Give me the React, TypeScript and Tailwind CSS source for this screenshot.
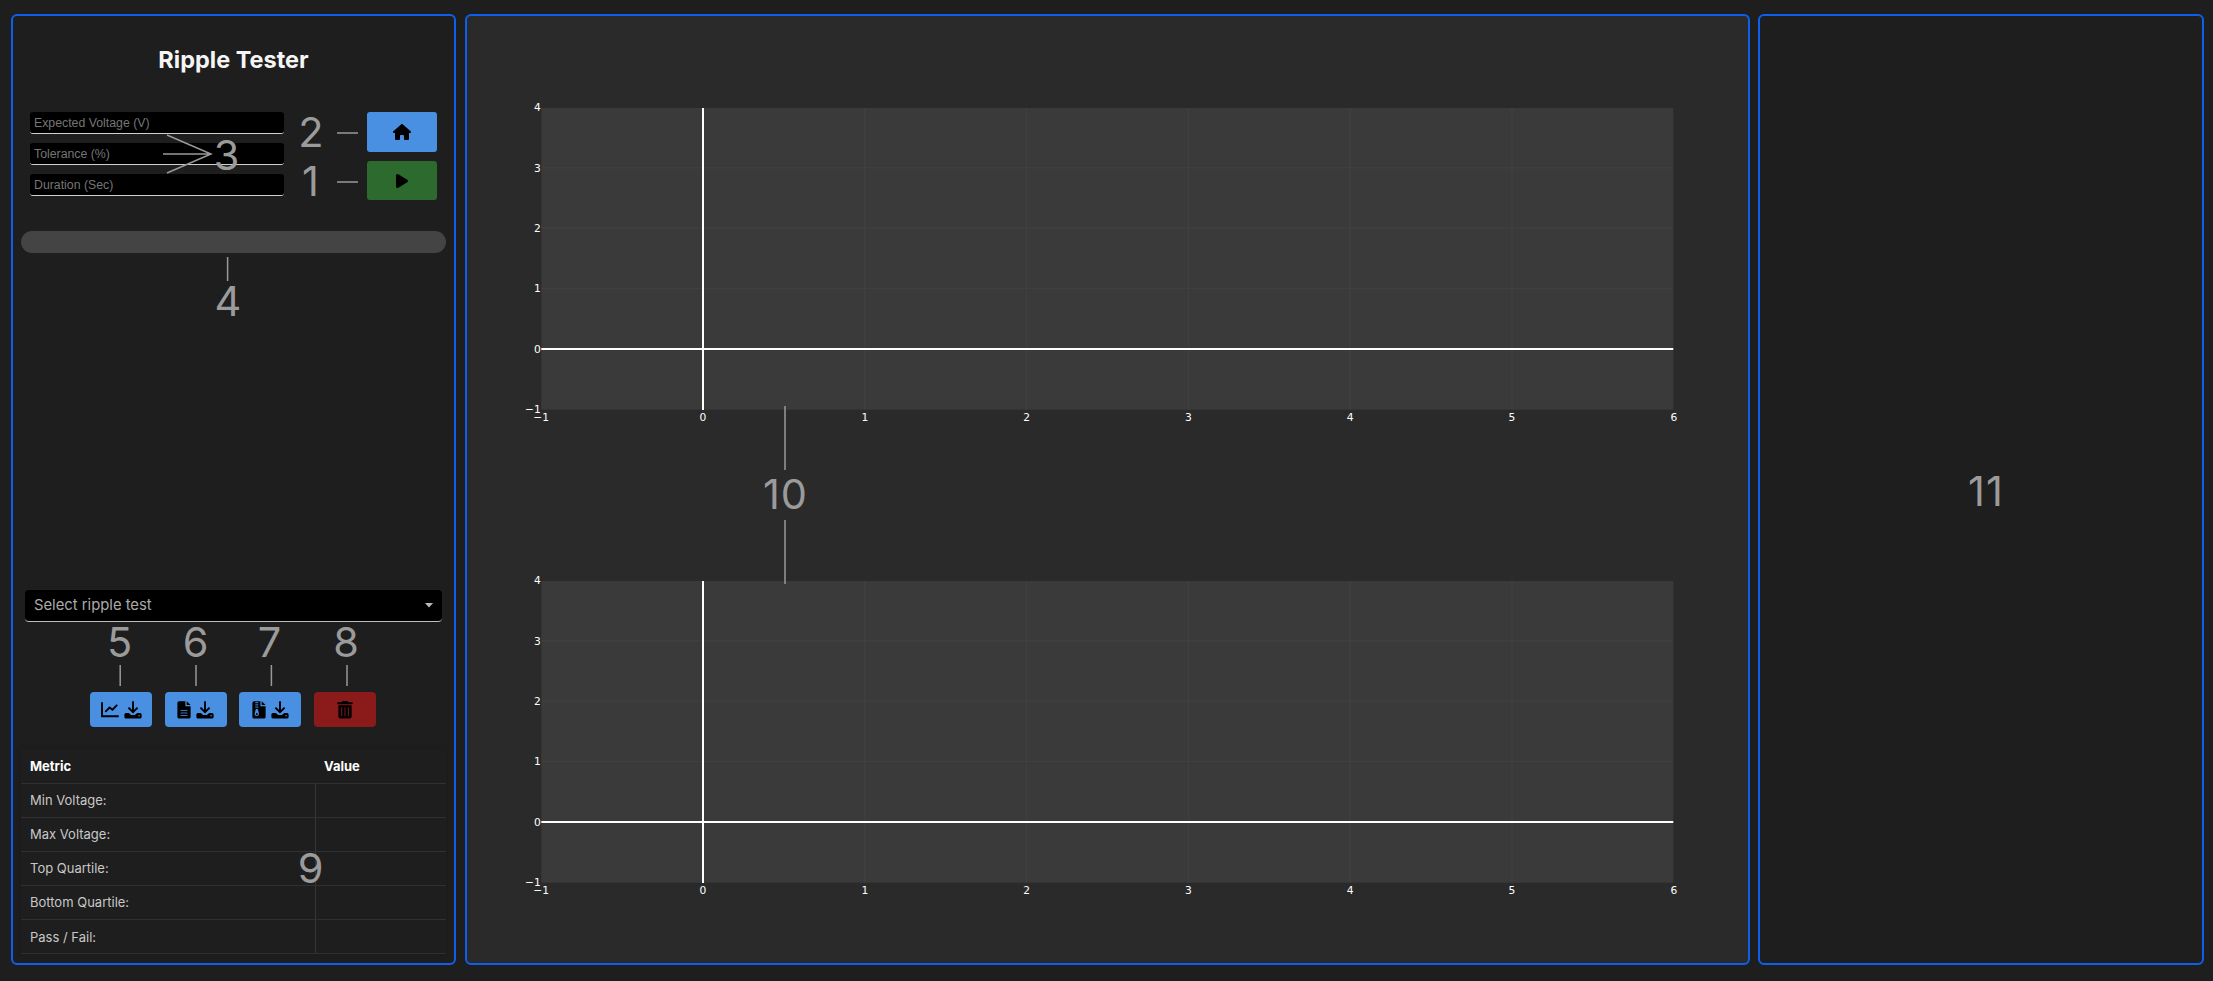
import React from "react";
import { FaHouse, FaPlay } from "react-icons/fa6";

const BLUE = "#4a90e2";

const Download = () => (
  <svg viewBox="0 0 18 18" className="h-[18px] w-[18px]" fill="none" stroke="#000" strokeWidth="1.9">
    <path d="M9 0.3V11M4.4 6.6L9 11.2L13.6 6.6" />
    <path
      d="M2 12h2.7l2.5 2h3.6l2.5-2H16a1.6 1.6 0 0 1 1.6 1.6v2.3a1.6 1.6 0 0 1-1.6 1.6H2A1.6 1.6 0 0 1 .4 15.9v-2.3A1.6 1.6 0 0 1 2 12Z"
      fill="#000"
      stroke="none"
    />
    <circle cx="15.1" cy="14.7" r="0.8" fill={BLUE} stroke="none" />
  </svg>
);

const ChartIcon = () => (
  <svg viewBox="0 0 18 18" className="h-[18px] w-[18px]" fill="none" stroke="#000" strokeWidth="1.9">
    <path d="M1 1.2V15.3H17.7M4.3 10.8L8.6 6.5L11.5 8.7L16.2 3.8" />
  </svg>
);

const FileIcon = () => (
  <svg viewBox="0 0 14 18" className="h-[18px] w-[14px]">
    <path d="M2 .3h6.4v4.9h5.2V16a1.6 1.6 0 0 1-1.6 1.6H2A1.6 1.6 0 0 1 .4 16V1.9A1.6 1.6 0 0 1 2 .3Z" />
    <path d="M9.7 .3L13.6 4.1H9.7Z" />
    <path d="M3.5 9.5h7M3.5 12h7M3.5 14.5h7" stroke={BLUE} strokeWidth="0.8" />
  </svg>
);

const ZipIcon = () => (
  <svg viewBox="0 0 14 18" className="h-[18px] w-[14px]">
    <path d="M2 .3h6.4v4.9h5.2V16a1.6 1.6 0 0 1-1.6 1.6H2A1.6 1.6 0 0 1 .4 16V1.9A1.6 1.6 0 0 1 2 .3Z" />
    <path d="M9.7 .3L13.6 4.1H9.7Z" />
    <path d="M3.3 1.7h3M3.3 3.9h3M3.3 6.1h3" stroke={BLUE} strokeWidth="1" />
    <path d="M3.8 8h2l1.2 4.8a2.2 2.2 0 1 1-4.4 0Z" fill={BLUE} />
    <circle cx="4.8" cy="13" r="1" />
  </svg>
);

const TrashIcon = () => (
  <svg viewBox="0 0 16 18" className="h-[18px] w-4">
    <path d="M.4 1.2h4.2L5.8 .1h4.4l1.2 1.1h4.2v2H.4ZM1.4 4.2h13.2v11.4a2 2 0 0 1-2 2H3.4a2 2 0 0 1-2-2Z" />
    <path d="M4.7 6.2v9M8 6.2v9M11.3 6.2v9" stroke="#8b1a1a" strokeWidth="0.9" />
  </svg>
);

const xTicks = [-1, 0, 1, 2, 3, 4, 5, 6];
const yTicks = [4, 3, 2, 1, 0, -1];
const label = (v: number) => (v < 0 ? "−1" : String(v));
const px = (v: number) => 236 + 161.8 * v;
const py = (v: number) => 333 - 60.4 * v;

function Plot() {
  return (
    <svg
      className="block h-[473px] w-full"
      viewBox="0 0 1281 473"
      fontFamily="'DejaVu Sans', sans-serif"
      fontSize="10.7"
      fill="#fff"
    >
      <rect x="74.3" y="92" width="1132" height="301.7" fill="#3a3a3a" />
      {[1, 2, 3, 4, 5].map((v) => (
        <rect key={v} x={px(v) - 0.5} y="92" width="1" height="301.7" fill="#424242" />
      ))}
      {[1, 2, 3].map((v) => (
        <rect key={v} x="74.3" y={py(v) - 0.5} width="1132" height="1" fill="#424242" />
      ))}
      <rect x="235" y="92" width="2" height="302" />
      <rect x="74.3" y="332" width="1132" height="2" />
      {yTicks.map((v) => (
        <text key={v} x="73.8" y={py(v) + 3.8} textAnchor="end">
          {label(v)}
        </text>
      ))}
      {xTicks.map((v) => (
        <text key={v} x={px(v)} y="405.3" textAnchor="middle">
          {label(v)}
        </text>
      ))}
    </svg>
  );
}

const fields = ["Expected Voltage (V)", "Tolerance (%)", "Duration (Sec)"];
const rows = ["Min Voltage:", "Max Voltage:", "Top Quartile:", "Bottom Quartile:", "Pass / Fail:"];

const callouts: { n: string; x: number; y: number }[] = [
  { n: "1", x: 311, y: 182 },
  { n: "2", x: 311.5, y: 133 },
  { n: "3", x: 227, y: 156 },
  { n: "4", x: 228.5, y: 302 },
  { n: "5", x: 120, y: 643 },
  { n: "6", x: 196, y: 643 },
  { n: "7", x: 270, y: 643 },
  { n: "8", x: 346.5, y: 643 },
  { n: "9", x: 311, y: 869 },
  { n: "10", x: 785.5, y: 495 },
  { n: "11", x: 1986, y: 491.5 },
];

const iconButton = "flex h-[35px] w-[62px] items-center justify-center gap-[5px] rounded-[4px] bg-[#4a90e2]";
const panel = "h-[951px] shrink-0 rounded-[6px] border-2 border-[#0f5fee]";

export default function App() {
  return (
    <div className="relative flex h-[981px] w-[2213px] overflow-hidden bg-[#1e1e1e] pl-[11px] pt-[14px] font-['Inter',sans-serif]">
      <section className={`${panel} flex w-[445px] flex-col px-2`}>
        <h1 className="mt-[27px] text-center text-[23.5px] leading-[34px] font-bold text-[#f5f5f5]">Ripple Tester</h1>

        <div className="mt-[35px] flex justify-between px-[9px]">
          <div className="flex flex-col gap-[9px]">
            {fields.map((f) => (
              <input
                key={f}
                placeholder={f}
                className="h-[22px] w-[253.5px] rounded-[3px] border-b border-[#d0d0d0] bg-black px-[4px] font-['Liberation_Sans',sans-serif] text-[12.3px] placeholder:text-[#757575]"
              />
            ))}
          </div>
          <div className="flex flex-col gap-[9px]">
            <button className="flex h-[40px] w-[70px] items-center justify-center rounded-[3px] bg-[#4a90e2] text-black">
              <FaHouse className="size-[18px]" />
            </button>
            <button className="flex h-[39px] w-[70px] items-center justify-center rounded-[3px] bg-[#2d6a2d] text-black">
              <FaPlay className="size-[16px]" />
            </button>
          </div>
        </div>

        <div className="mt-[31px] h-[22px] rounded-full bg-[#444]" />

        <div className="mx-[4px] mt-[337px] flex h-[32px] items-center justify-between rounded-[4px] border-b border-[#bdbdbd] bg-black px-[9px] text-[14.8px] text-[#aaa]">
          <span>Select ripple test</span>
          <svg viewBox="0 0 8 5" className="h-[5px] w-2">
            <path d="M0 0H8L4 4.5Z" fill="#bbb" />
          </svg>
        </div>

        <div className="mt-[70px] flex justify-center gap-[12.5px] pr-px">
          <button className={iconButton}>
            <ChartIcon />
            <Download />
          </button>
          <button className={iconButton}>
            <FileIcon />
            <Download />
          </button>
          <button className={iconButton}>
            <ZipIcon />
            <Download />
          </button>
          <button className="flex h-[35px] w-[62px] items-center justify-center rounded-[4px] bg-[#8b1a1a]">
            <TrashIcon />
          </button>
        </div>

        <div className="mt-[22px] text-[13px] text-[#c8c8c8] shadow-[0_0_5px_rgba(0,0,0,0.15)]">
          <div className="grid h-[34.5px] grid-cols-[294px_1fr] items-center border-b border-[#303030] pt-[2px] font-bold text-white">
            <span className="pl-[9px]">Metric</span>
            <span className="pl-[9px]">Value</span>
          </div>
          {rows.map((r) => (
            <div key={r} className="grid h-[34.2px] grid-cols-[294px_1fr] border-b border-[#303030]">
              <span className="flex items-center pt-px pl-[9px]">{r}</span>
              <span className="border-l border-[#363636]" />
            </div>
          ))}
        </div>
      </section>

      <main className={`${panel} ml-[9px] w-[1285px] bg-[#2a2a2a]`}>
        <Plot />
        <Plot />
      </main>

      <aside className={`${panel} ml-[8px] w-[446px]`} />

      <svg
        className="pointer-events-none absolute inset-0 h-[981px] w-[2213px]"
        fill="none"
        stroke="#999"
        strokeWidth="1.5"
      >
        <path d="M337 133H358M337 182H358M163 154H211M167 135L211 154L167 173" />
        <path d="M227.6 257V281M120.2 665V686M196 665V686M271.4 665V686M347 665V686M785 406V470M785 520V584" />
      </svg>
      {callouts.map((c) => (
        <span
          key={c.n}
          className="pointer-events-none absolute -translate-x-1/2 -translate-y-1/2 text-[41.5px] leading-none tracking-[1px] text-[#9b9b9b]"
          style={{ left: c.x, top: c.y }}
        >
          {c.n}
        </span>
      ))}
    </div>
  );
}
